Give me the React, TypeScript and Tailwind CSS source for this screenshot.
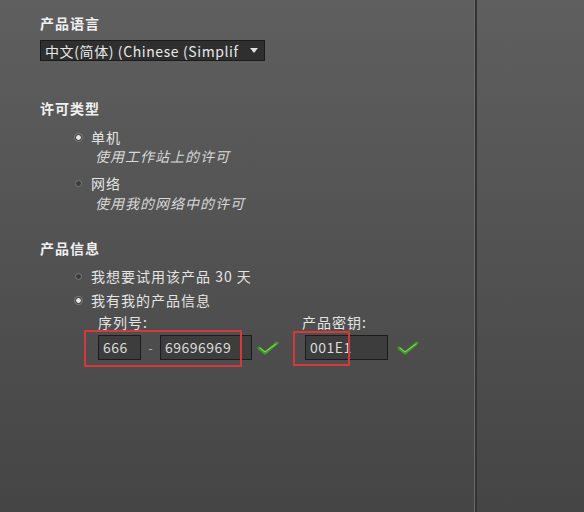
import React from "react";

const font = { fontFamily: '"Noto Sans CJK SC", "Noto Sans", sans-serif' };

function Radio({ checked }: { checked?: boolean }) {
  return checked ? (
    <span className="w-[7px] h-[7px] rounded-full bg-[#e8e8e8] border border-[#2a2a2a] shadow-[0_0_0_1px_#777]" />
  ) : (
    <span className="w-[7px] h-[7px] rounded-full bg-[#3c3c3c] border border-[#7a7a7a]" />
  );
}

function Check() {
  return (
    <svg width="22" height="14" viewBox="0 0 22 14">
      <path d="M2 7 L8 12 L20 2" fill="none" stroke="#3f9a2f" strokeWidth="3" strokeLinecap="round" strokeLinejoin="round" />
      <path d="M3 7 L8 11 L19 3" fill="none" stroke="#8fdc5a" strokeWidth="1" strokeLinecap="round" />
    </svg>
  );
}

function Field({ w, value }: { w: string; value?: string }) {
  return (
    <div className={`${w} h-[25px] bg-[#3d3d3d] border border-[#1c1c1c] flex items-center px-[4px] text-[14px] tracking-[0.5px] text-[#dcdcdc]`}>
      {value}
    </div>
  );
}

export default function App() {
  return (
    <div
      className="w-[584px] h-[512px] flex bg-gradient-to-b from-[#5f5f5f] to-[#454545] text-[#e4e4e4] overflow-hidden"
      style={font}
    >
      <div className="w-[474px] pl-[40px] pt-[15px] flex flex-col">
        <div className="text-[14px] tracking-[1px] leading-[16px] font-bold text-[#f0f0f0]">产品语言</div>
        <div className="mt-[9px] w-[225px] h-[21px] bg-[#2f2f2f] border border-[#1a1a1a] flex items-center justify-between pl-[4px] pr-[6px] text-[14px] tracking-[0.6px] leading-[16px] text-[#e8e8e8] whitespace-nowrap overflow-hidden">
          <span>中文(简体) (Chinese (Simplif</span>
          <svg width="8" height="5" viewBox="0 0 8 5" className="shrink-0">
            <path d="M0 0 L8 0 L4 5 Z" fill="#e0e0e0" />
          </svg>
        </div>

        <div className="mt-[39px] text-[14px] tracking-[1px] leading-[16px] font-bold text-[#f0f0f0]">许可类型</div>
        <div className="mt-[13px] ml-[35px] flex items-center gap-[9px] text-[14px] tracking-[1px] leading-[16px]">
          <Radio checked />
          <span>单机</span>
        </div>
        <div className="mt-[3px] ml-[55px] text-[14px] tracking-[1px] leading-[16px] italic text-[#d8d8d8]">使用工作站上的许可</div>
        <div className="mt-[11px] ml-[35px] flex items-center gap-[9px] text-[14px] tracking-[1px] leading-[16px]">
          <Radio />
          <span>网络</span>
        </div>
        <div className="mt-[4px] ml-[55px] text-[14px] tracking-[1px] leading-[16px] italic text-[#d8d8d8]">使用我的网络中的许可</div>

        <div className="mt-[29px] text-[14px] tracking-[1px] leading-[16px] font-bold text-[#f0f0f0]">产品信息</div>
        <div className="mt-[12px] ml-[35px] flex items-center gap-[9px] text-[14px] tracking-[1px] leading-[16px]">
          <Radio />
          <span>我想要试用该产品 30 天</span>
        </div>
        <div className="mt-[8px] ml-[35px] flex items-center gap-[9px] text-[14px] tracking-[1px] leading-[16px]">
          <Radio checked />
          <span>我有我的产品信息</span>
        </div>

        <div className="mt-[6px] flex text-[14px] tracking-[1px] leading-[16px]">
          <span className="ml-[58px] w-[204px]">序列号:</span>
          <span>产品密钥:</span>
        </div>

        <div className="relative mt-[5px] flex items-center">
          <div className="ml-[58px]">
            <Field w="w-[43px]" value="666" />
          </div>
          <span className="w-[19px] text-center text-[12px] text-[#bdbdbd]">-</span>
          <Field w="w-[92px]" value="69696969" />
          <div className="ml-[5px]">
            <Check />
          </div>
          <div className="ml-[26px]">
            <Field w="w-[83px]" value="001E1" />
          </div>
          <div className="ml-[9px]">
            <Check />
          </div>

          <div className="absolute left-[44px] top-[-5px] w-[158px] h-[37px] border-2 border-[#d8383a] rounded-[1px] pointer-events-none" />
          <div className="absolute left-[253px] top-[-4px] w-[57px] h-[35px] border-2 border-[#d8383a] rounded-[1px] pointer-events-none" />
        </div>
      </div>

      <div className="w-[1px] bg-[#6a6a6a]" />
      <div className="w-[2px] bg-[#333333]" />
      <div className="flex-1" />
    </div>
  );
}
